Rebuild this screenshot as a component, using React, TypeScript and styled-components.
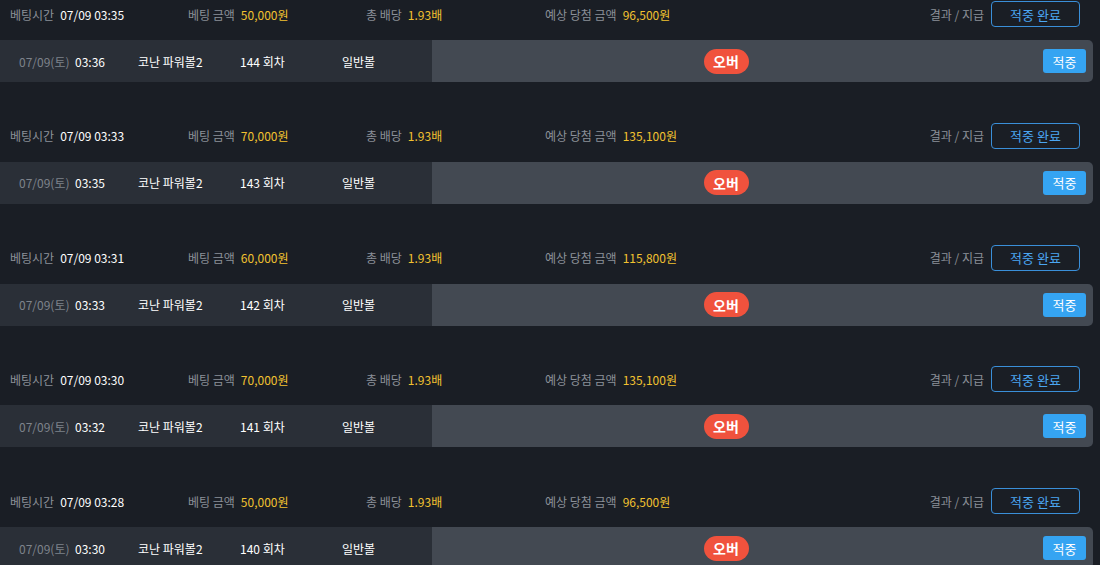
import React from 'react';
import styled, { createGlobalStyle } from 'styled-components';

const GlobalStyle = createGlobalStyle`
    html, body {
        margin: 0;
        padding: 0;
        background: #1a1e25;
        font-family: "Noto Sans CJK KR", "Noto Sans", sans-serif;
        font-size: 12px;
        overflow: hidden;
    }
`;

interface Bet {
    betTime: string;
    amount: string;
    odds: string;
    expected: string;
    date: string;
    time: string;
    game: string;
    round: string;
    type: string;
    pick: string;
}

const bets: Bet[] = [
    { betTime: '07/09 03:35', amount: '50,000원', odds: '1.93배', expected: '96,500원', date: '07/09(토)', time: '03:36', game: '코난 파워볼2', round: '144 회차', type: '일반볼', pick: '오버' },
    { betTime: '07/09 03:33', amount: '70,000원', odds: '1.93배', expected: '135,100원', date: '07/09(토)', time: '03:35', game: '코난 파워볼2', round: '143 회차', type: '일반볼', pick: '오버' },
    { betTime: '07/09 03:31', amount: '60,000원', odds: '1.93배', expected: '115,800원', date: '07/09(토)', time: '03:33', game: '코난 파워볼2', round: '142 회차', type: '일반볼', pick: '오버' },
    { betTime: '07/09 03:30', amount: '70,000원', odds: '1.93배', expected: '135,100원', date: '07/09(토)', time: '03:32', game: '코난 파워볼2', round: '141 회차', type: '일반볼', pick: '오버' },
    { betTime: '07/09 03:28', amount: '50,000원', odds: '1.93배', expected: '96,500원', date: '07/09(토)', time: '03:30', game: '코난 파워볼2', round: '140 회차', type: '일반볼', pick: '오버' },
];

const List = styled.div`
    padding-top: 1px;
`;

const Block = styled.div`
    display: flex;
    flex-direction: column;
    gap: 13px;
    margin-bottom: 40.75px;
`;

const InfoBar = styled.div`
    display: flex;
    align-items: center;
    height: 26px;
    padding: 0 20px 0 10px;
`;

const InfoCell = styled.div<{ $width?: number }>`
    display: flex;
    align-items: center;
    gap: 6px;
    width: ${(p) => (p.$width ? `${p.$width}px` : 'auto')};
    flex: ${(p) => (p.$width ? 'none' : '1')};
    white-space: nowrap;
`;

const Label = styled.span`
    color: #8b9098;
`;

const Value = styled.span<{ $gold?: boolean }>`
    color: ${(p) => (p.$gold ? '#f2c230' : '#ffffff')};
`;

const ResultGroup = styled.div`
    display: flex;
    align-items: center;
    gap: 7px;
`;

const DoneButton = styled.button`
    width: 89px;
    height: 26px;
    box-sizing: border-box;
    border: 1px solid #3a8fd9;
    border-radius: 4px;
    background: transparent;
    color: #4ba6f2;
    font-family: inherit;
    font-size: 13px;
    padding: 0;
`;

const GameRow = styled.div`
    display: flex;
    height: 42px;
    margin-right: 7px;
    border-radius: 0 5px 5px 0;
    overflow: hidden;
`;

const GameInfo = styled.div`
    display: flex;
    align-items: center;
    width: 432px;
    padding-left: 19px;
    box-sizing: border-box;
    background: #2a2f37;
`;

const GameCell = styled.span<{ $width: number; $dim?: boolean }>`
    width: ${(p) => p.$width}px;
    color: ${(p) => (p.$dim ? '#7e838b' : '#ffffff')};
    white-space: nowrap;
`;

const PickArea = styled.div`
    flex: 1;
    display: flex;
    align-items: center;
    padding-right: 7px;
    background: #434952;
`;

const PickSlot = styled.div`
    width: 588px;
    display: flex;
    justify-content: center;
`;

const PickPill = styled.span`
    display: inline-flex;
    align-items: center;
    justify-content: center;
    width: 45px;
    height: 25px;
    border-radius: 13px;
    background: #f0523d;
    color: #ffffff;
    font-weight: bold;
    font-size: 14px;
`;

const HitBadge = styled.span`
    margin-left: auto;
    display: inline-flex;
    align-items: center;
    justify-content: center;
    width: 43px;
    height: 24px;
    border-radius: 3px;
    background: #35a4f2;
    color: #ffffff;
    font-size: 13px;
`;

const App: React.FC = () => {
    return (
        <>
            <GlobalStyle />
            <List>
                {bets.map((bet) => (
                    <Block key={bet.round}>
                        <InfoBar>
                            <InfoCell $width={178}>
                                <Label>베팅시간</Label>
                                <Value>{bet.betTime}</Value>
                            </InfoCell>
                            <InfoCell $width={178}>
                                <Label>베팅 금액</Label>
                                <Value $gold>{bet.amount}</Value>
                            </InfoCell>
                            <InfoCell $width={179}>
                                <Label>총 배당</Label>
                                <Value $gold>{bet.odds}</Value>
                            </InfoCell>
                            <InfoCell>
                                <Label>예상 당첨 금액</Label>
                                <Value $gold>{bet.expected}</Value>
                            </InfoCell>
                            <ResultGroup>
                                <Label>결과 / 지급</Label>
                                <DoneButton>적중 완료</DoneButton>
                            </ResultGroup>
                        </InfoBar>
                        <GameRow>
                            <GameInfo>
                                <GameCell $width={56} $dim>{bet.date}</GameCell>
                                <GameCell $width={63}>{bet.time}</GameCell>
                                <GameCell $width={102}>{bet.game}</GameCell>
                                <GameCell $width={102}>{bet.round}</GameCell>
                                <GameCell $width={70}>{bet.type}</GameCell>
                            </GameInfo>
                            <PickArea>
                                <PickSlot>
                                    <PickPill>{bet.pick}</PickPill>
                                </PickSlot>
                                <HitBadge>적중</HitBadge>
                            </PickArea>
                        </GameRow>
                    </Block>
                ))}
            </List>
        </>
    );
};

export default App;
